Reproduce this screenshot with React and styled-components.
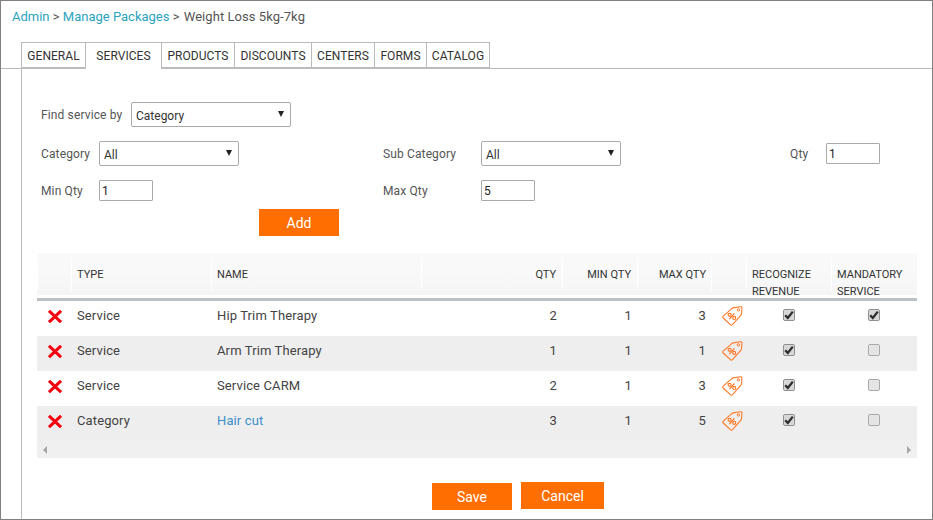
import React from 'react'
import styled, { createGlobalStyle } from 'styled-components'

const GlobalStyle = createGlobalStyle`
  html, body {
    margin: 0;
    padding: 0;
    background: #fff;
    font-family: Roboto, "Liberation Sans", sans-serif;
    color: #444;
  }
  * {
    box-sizing: border-box;
  }
`

const Frame = styled.div`
  width: 933px;
  height: 520px;
  border: 1px solid #808080;
  overflow: hidden;
  display: flex;
  flex-direction: column;
`

const Breadcrumb = styled.div`
  padding: 7px 0 0 11px;
  height: 41px;
  font-size: 13px;
  line-height: 17px;
  color: #555;
`

const Crumb = styled.a`
  color: #2aa3bd;
`

const Current = styled.span`
  margin-left: 1px;
  letter-spacing: 0.06px;
`

const Tabs = styled.div`
  display: flex;
  height: 27px;
  padding-left: 20px;
  border-bottom: 1px solid #bbb;
`

const Tab = styled.div`
  width: ${props => props.width}px;
  height: ${props => (props.active ? 27 : 26)}px;
  border: 1px solid #bbb;
  border-left-width: ${props => (props.first ? 1 : 0)}px;
  border-bottom-width: ${props => (props.active ? 0 : 1)}px;
  background: #fff;
  font-size: 12px;
  letter-spacing: 0.05px;
  line-height: 26px;
  text-align: center;
  color: #333;
  white-space: nowrap;
`

const Panel = styled.div`
  flex: 1;
  margin-left: 20px;
  border-left: 1px solid #bbb;
  padding: 33px 0 0 15px;
`

const FindRow = styled.div`
  display: flex;
  align-items: center;
  height: 25px;
  margin-left: 4px;
  margin-bottom: 14px;
`

const FormGrid = styled.div`
  display: grid;
  grid-template-columns: 58px 284px 98px 309px 36px 54px;
  grid-template-rows: 25px 21px;
  row-gap: 14px;
  align-items: center;
  margin-left: 4px;
`

const Label = styled.label`
  font-size: 12px;
  letter-spacing: 0.13px;
  color: #555;
  width: ${props => (props.width ? `${props.width}px` : 'auto')};
`

const SelectWrap = styled.div`
  position: relative;
  width: ${props => props.width}px;
  height: 25px;
  border: 1px solid #aaa;
  border-radius: 2px;
  background: #fff;
  padding: 0 4px;
  font-size: 12px;
  line-height: 26px;
  color: #333;

  &:after {
    content: '';
    position: absolute;
    right: 6px;
    top: 8px;
    border-left: 3px solid transparent;
    border-right: 3px solid transparent;
    border-top: 6px solid #222;
  }
`

const Input = styled.input`
  width: 54px;
  height: 21px;
  border: 1px solid #aaa;
  border-radius: 1px;
  padding: 0 2px;
  font-family: Roboto, "Liberation Sans", sans-serif;
  font-size: 12px;
  color: #222;
  outline: none;
`

const Button = styled.button`
  display: block;
  width: ${props => props.width}px;
  height: 27px;
  border: 0;
  border-radius: 0;
  padding: 0;
  background: #ff6e00;
  color: #fff;
  font-family: Roboto, "Liberation Sans", sans-serif;
  font-size: 14px;
`

const AddButton = styled(Button)`
  margin: 8px 0 17px 222px;
`

const TableWrap = styled.div`
  width: 880px;
  overflow: hidden;
`

const Table = styled.table`
  width: 880px;
  table-layout: fixed;
  border-collapse: collapse;
`

const HeadRow = styled.tr`
  height: 45px;
`

const Th = styled.th`
  position: relative;
  height: 45px;
  padding: 13px ${props => props.padRight || 6}px 0 6px;
  vertical-align: top;
  background: linear-gradient(#f9f9f9, #f9f9f9 45%, #f5f5f5);
  background-size: 100% 42px;
  background-repeat: no-repeat;
  font-size: 11px;
  line-height: 17px;
  font-weight: 400;
  color: #333;
  text-align: ${props => (props.right ? 'right' : 'left')};

  &:before {
    content: '';
    position: absolute;
    left: 0;
    top: 5px;
    height: 32px;
    border-left: 1px solid #fff;
  }
`

// header labels wrap past the row, so the text must not stretch it
const HeadText = styled.div`
  height: 17px;
  white-space: ${props => (props.wrap ? 'normal' : 'nowrap')};
`

const HeadRule = styled.tr`
  height: 3px;

  td {
    padding: 0;
    height: 3px;
    background: #bcc1c6;
  }
`

const Row = styled.tr`
  height: 35px;
  background: ${props => (props.shaded ? '#eeeeee' : '#fff')};
`

const Td = styled.td`
  padding: 6px 5px 0 6px;
  vertical-align: top;
  font-size: 13px;
  letter-spacing: 0.12px;
  line-height: 17px;
  color: #444;
  text-align: ${props => props.align || 'left'};
`

const IconCell = styled.td`
  padding: ${props => props.pad};
  vertical-align: top;
  line-height: 0;
`

const NameLink = styled.a`
  color: #3d8fca;
`

const CheckBox = styled.span`
  display: block;
  width: 12px;
  height: 12px;
  margin-left: 37px;
  margin-top: 8px;
  border: 1px solid ${props => (props.checked ? '#8f8f8f' : '#a8a8a8')};
  border-radius: 2px;
  background: ${props => (props.checked ? '#d6d6d6' : '#e4e4e4')};
  box-shadow: inset 0 0 1px #fff;
`

const ScrollBar = styled.div`
  display: flex;
  justify-content: space-between;
  align-items: center;
  height: 17px;
  padding: 0 6px;
  background: #f0f0f0;
`

const Arrow = styled.span`
  border-top: 4px solid transparent;
  border-bottom: 4px solid transparent;
  border-${props => (props.right ? 'left' : 'right')}: 4px solid #a6a6a6;
`

const Actions = styled.div`
  display: flex;
  align-items: flex-start;
  gap: 9px;
  margin: 24px 0 0 395px;
`

const SaveButton = styled(Button)`
  margin-top: 1px;
`

const RemoveIcon = () => (
  <svg width="14" height="13" viewBox="0 0 14 13">
    <path d="M1 0.8 L13 12.2 M13 0.8 L1 12.2" stroke="#f50010" strokeWidth="3" fill="none" />
  </svg>
)

const TagIcon = () => (
  <svg width="21" height="21" viewBox="0 0 21 21" fill="none" stroke="#ff7a2a">
    <path d="M1.2 10.2 L9.8 2.6 Q10.4 2.1 11.2 1.9 L18.4 0.7 Q20 0.6 19.9 2.1 L19.5 7.8 Q19.4 8.6 18.9 9.2 L10.6 18.6 Q9.4 19.6 8.4 18.6 L1.2 12 Q0.4 11 1.2 10.2 Z" strokeWidth="1.1" />
    <circle cx="16.4" cy="3.9" r="1.2" strokeWidth="1" />
    <path d="M7.4 13.2 L12.4 7.4" strokeWidth="1.3" />
    <circle cx="7.6" cy="8.8" r="1.5" strokeWidth="1.2" />
    <circle cx="12.2" cy="11.9" r="1.5" strokeWidth="1.2" />
  </svg>
)

const CheckMark = () => (
  <svg width="10" height="10" viewBox="0 0 10 10" style={{ display: 'block' }}>
    <path d="M1.2 5.2 L3.8 8 L8.8 1.6" stroke="#2f2f2f" strokeWidth="2.3" fill="none" />
  </svg>
)

const tabs = [
  ['GENERAL', 65],
  ['SERVICES', 76],
  ['PRODUCTS', 73],
  ['DISCOUNTS', 77],
  ['CENTERS', 63],
  ['FORMS', 52],
  ['CATALOG', 63]
]

const rows = [
  { type: 'Service', name: 'Hip Trim Therapy', qty: 2, min: 1, max: 3, mandatory: true },
  { type: 'Service', name: 'Arm Trim Therapy', qty: 1, min: 1, max: 1 },
  { type: 'Service', name: 'Service CARM', qty: 2, min: 1, max: 3 },
  { type: 'Category', name: 'Hair cut', qty: 3, min: 1, max: 5, link: true }
]

const columns = [34, 140, 210, 141, 75, 74, 35, 85, 86]

const App = () => (
  <Frame>
    <GlobalStyle />
    <Breadcrumb>
      <Crumb>Admin</Crumb> &gt; <Crumb>Manage Packages</Crumb> &gt; <Current>Weight Loss 5kg-7kg</Current>
    </Breadcrumb>
    <Tabs>
      {tabs.map(([label, width], i) => (
        <Tab key={label} width={width} first={i === 0} active={label === 'SERVICES'}>
          {label}
        </Tab>
      ))}
    </Tabs>
    <Panel>
      <FindRow>
        <Label width={90}>Find service by</Label>
        <SelectWrap width={160}>Category</SelectWrap>
      </FindRow>
      <FormGrid>
        <Label>Category</Label>
        <SelectWrap width={140}>All</SelectWrap>
        <Label>Sub Category</Label>
        <SelectWrap width={140}>All</SelectWrap>
        <Label>Qty</Label>
        <Input defaultValue="1" />
        <Label>Min Qty</Label>
        <Input defaultValue="1" />
        <Label>Max Qty</Label>
        <Input defaultValue="5" />
      </FormGrid>
      <AddButton width={80}>Add</AddButton>
      <TableWrap>
        <Table>
          <colgroup>
            {columns.map((width, i) => (
              <col key={i} width={width} />
            ))}
          </colgroup>
          <thead>
            <HeadRow>
              <Th />
              <Th><HeadText>TYPE</HeadText></Th>
              <Th><HeadText>NAME</HeadText></Th>
              <Th right><HeadText>QTY</HeadText></Th>
              <Th right><HeadText>MIN QTY</HeadText></Th>
              <Th right padRight={5}><HeadText>MAX QTY</HeadText></Th>
              <Th />
              <Th><HeadText wrap="true">RECOGNIZE REVENUE</HeadText></Th>
              <Th><HeadText wrap="true">MANDATORY SERVICE</HeadText></Th>
            </HeadRow>
            <HeadRule>
              <td colSpan={9} />
            </HeadRule>
          </thead>
          <tbody>
            {rows.map((row, i) => (
              <Row key={row.name} shaded={i % 2 === 1}>
                <IconCell pad="9px 0 0 11px">
                  <RemoveIcon />
                </IconCell>
                <Td>{row.type}</Td>
                <Td>{row.link ? <NameLink>{row.name}</NameLink> : row.name}</Td>
                <Td align="right">{row.qty}</Td>
                <Td align="right">{row.min}</Td>
                <Td align="right">{row.max}</Td>
                <IconCell pad="5px 0 0 11px">
                  <TagIcon />
                </IconCell>
                <IconCell pad="0">
                  <CheckBox checked>
                    <CheckMark />
                  </CheckBox>
                </IconCell>
                <IconCell pad="0">
                  <CheckBox checked={row.mandatory}>
                    {row.mandatory && <CheckMark />}
                  </CheckBox>
                </IconCell>
              </Row>
            ))}
          </tbody>
        </Table>
        <ScrollBar>
          <Arrow />
          <Arrow right />
        </ScrollBar>
      </TableWrap>
      <Actions>
        <SaveButton width={80}>Save</SaveButton>
        <Button width={83}>Cancel</Button>
      </Actions>
    </Panel>
  </Frame>
)

export default App
